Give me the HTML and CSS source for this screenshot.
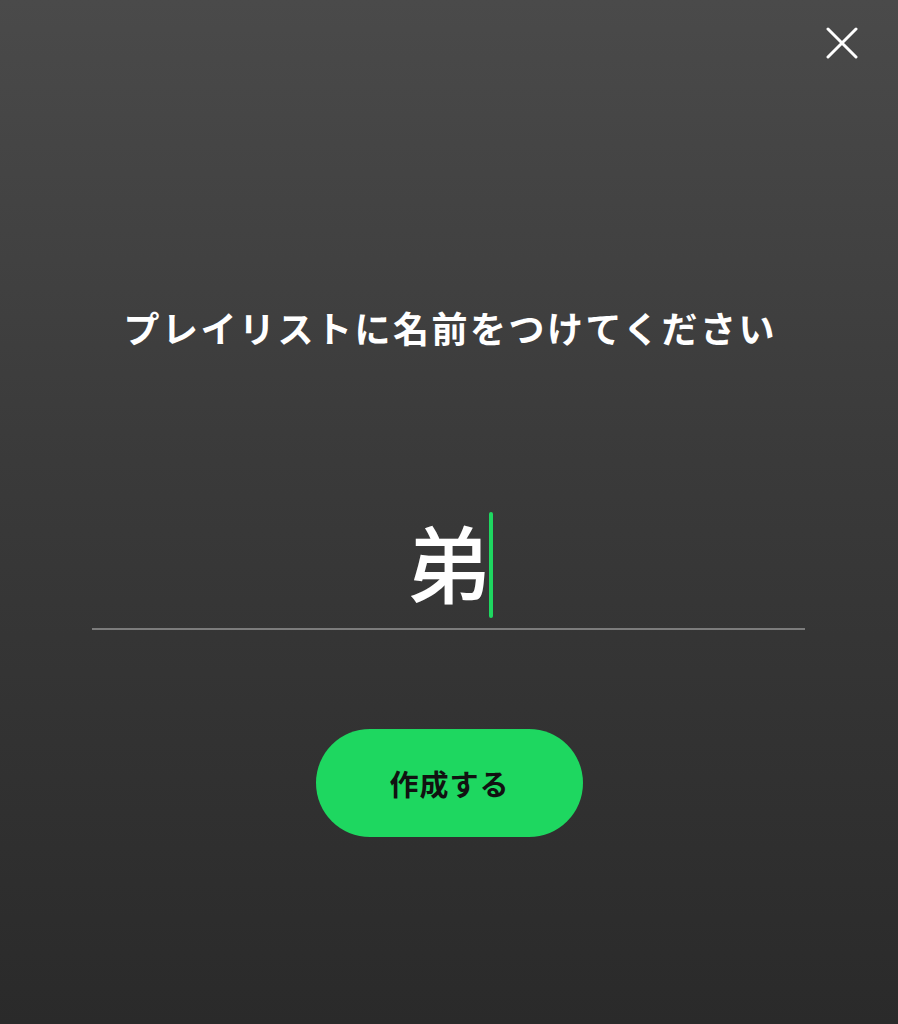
FILE: index.html
```html
<!DOCTYPE html>
<html lang="ja">
<head>
<meta charset="utf-8">
<link rel="stylesheet" href="styles.css">
</head>
<body>
<div class="screen">
  <div class="top-bar">
    <button class="close" aria-label="閉じる">
      <svg viewBox="0 0 32 32" width="32" height="32"><path d="M2 2 L30 30 M30 2 L2 30" stroke="#fff" stroke-width="3" stroke-linecap="round" fill="none"/></svg>
    </button>
  </div>
  <h1 class="title">プレイリストに名前をつけてください</h1>
  <div class="field">
    <div class="value"><span class="text">弟</span><span class="caret"></span></div>
    <div class="underline"></div>
  </div>
  <div class="actions">
    <button class="create">作成する</button>
  </div>
</div>
</body>
</html>
```

FILE: styles.css
```css
html, body {
  margin: 0;
  padding: 0;
}
body {
  width: 898px;
  height: 1024px;
  overflow: hidden;
  font-family: "Noto Sans CJK JP", "Noto Sans", sans-serif;
  color: #fff;
  background: #2b2b2b;
}
.screen {
  height: 1024px;
  display: flex;
  flex-direction: column;
  background: linear-gradient(180deg, #4a4a4a 0%, #3a3a3a 45%, #2a2a2a 100%);
}
.top-bar {
  display: flex;
  justify-content: flex-end;
  padding: 27px 40px 0 0;
}
.close {
  width: 32px;
  height: 32px;
  padding: 0;
  border: none;
  background: none;
  display: block;
}
.close svg { display: block; }
.title {
  margin: 248px 0 0;
  font-size: 36px;
  line-height: 40px;
  font-weight: 700;
  text-align: center;
  letter-spacing: 2.5px;
  text-indent: 2.5px;
}
.field {
  margin: 165px 93px 0 92px;
  display: flex;
  flex-direction: column;
  align-items: center;
}
.value {
  display: flex;
  align-items: center;
  height: 106px;
  margin-left: 2px;
}
.text {
  font-size: 84px;
  line-height: 106px;
  font-weight: 500;
  position: relative;
  top: -4px;
}
.caret {
  width: 4px;
  height: 106px;
  border-radius: 2px;
  background: #1ed760;
  margin-left: -2px;
}
.underline {
  align-self: stretch;
  height: 2px;
  margin-top: 10px;
  background: #7c7c7c;
}
.actions {
  display: flex;
  justify-content: center;
  margin-top: 99px;
}
.create {
  width: 267px;
  height: 108px;
  border: none;
  border-radius: 54px;
  background: #1ed760;
  color: #111;
  font-family: "Noto Sans CJK JP", "Noto Sans", sans-serif;
  font-size: 29px;
  font-weight: 700;
  letter-spacing: 1px;
  padding: 0;
  margin-left: 1px;
}
```
